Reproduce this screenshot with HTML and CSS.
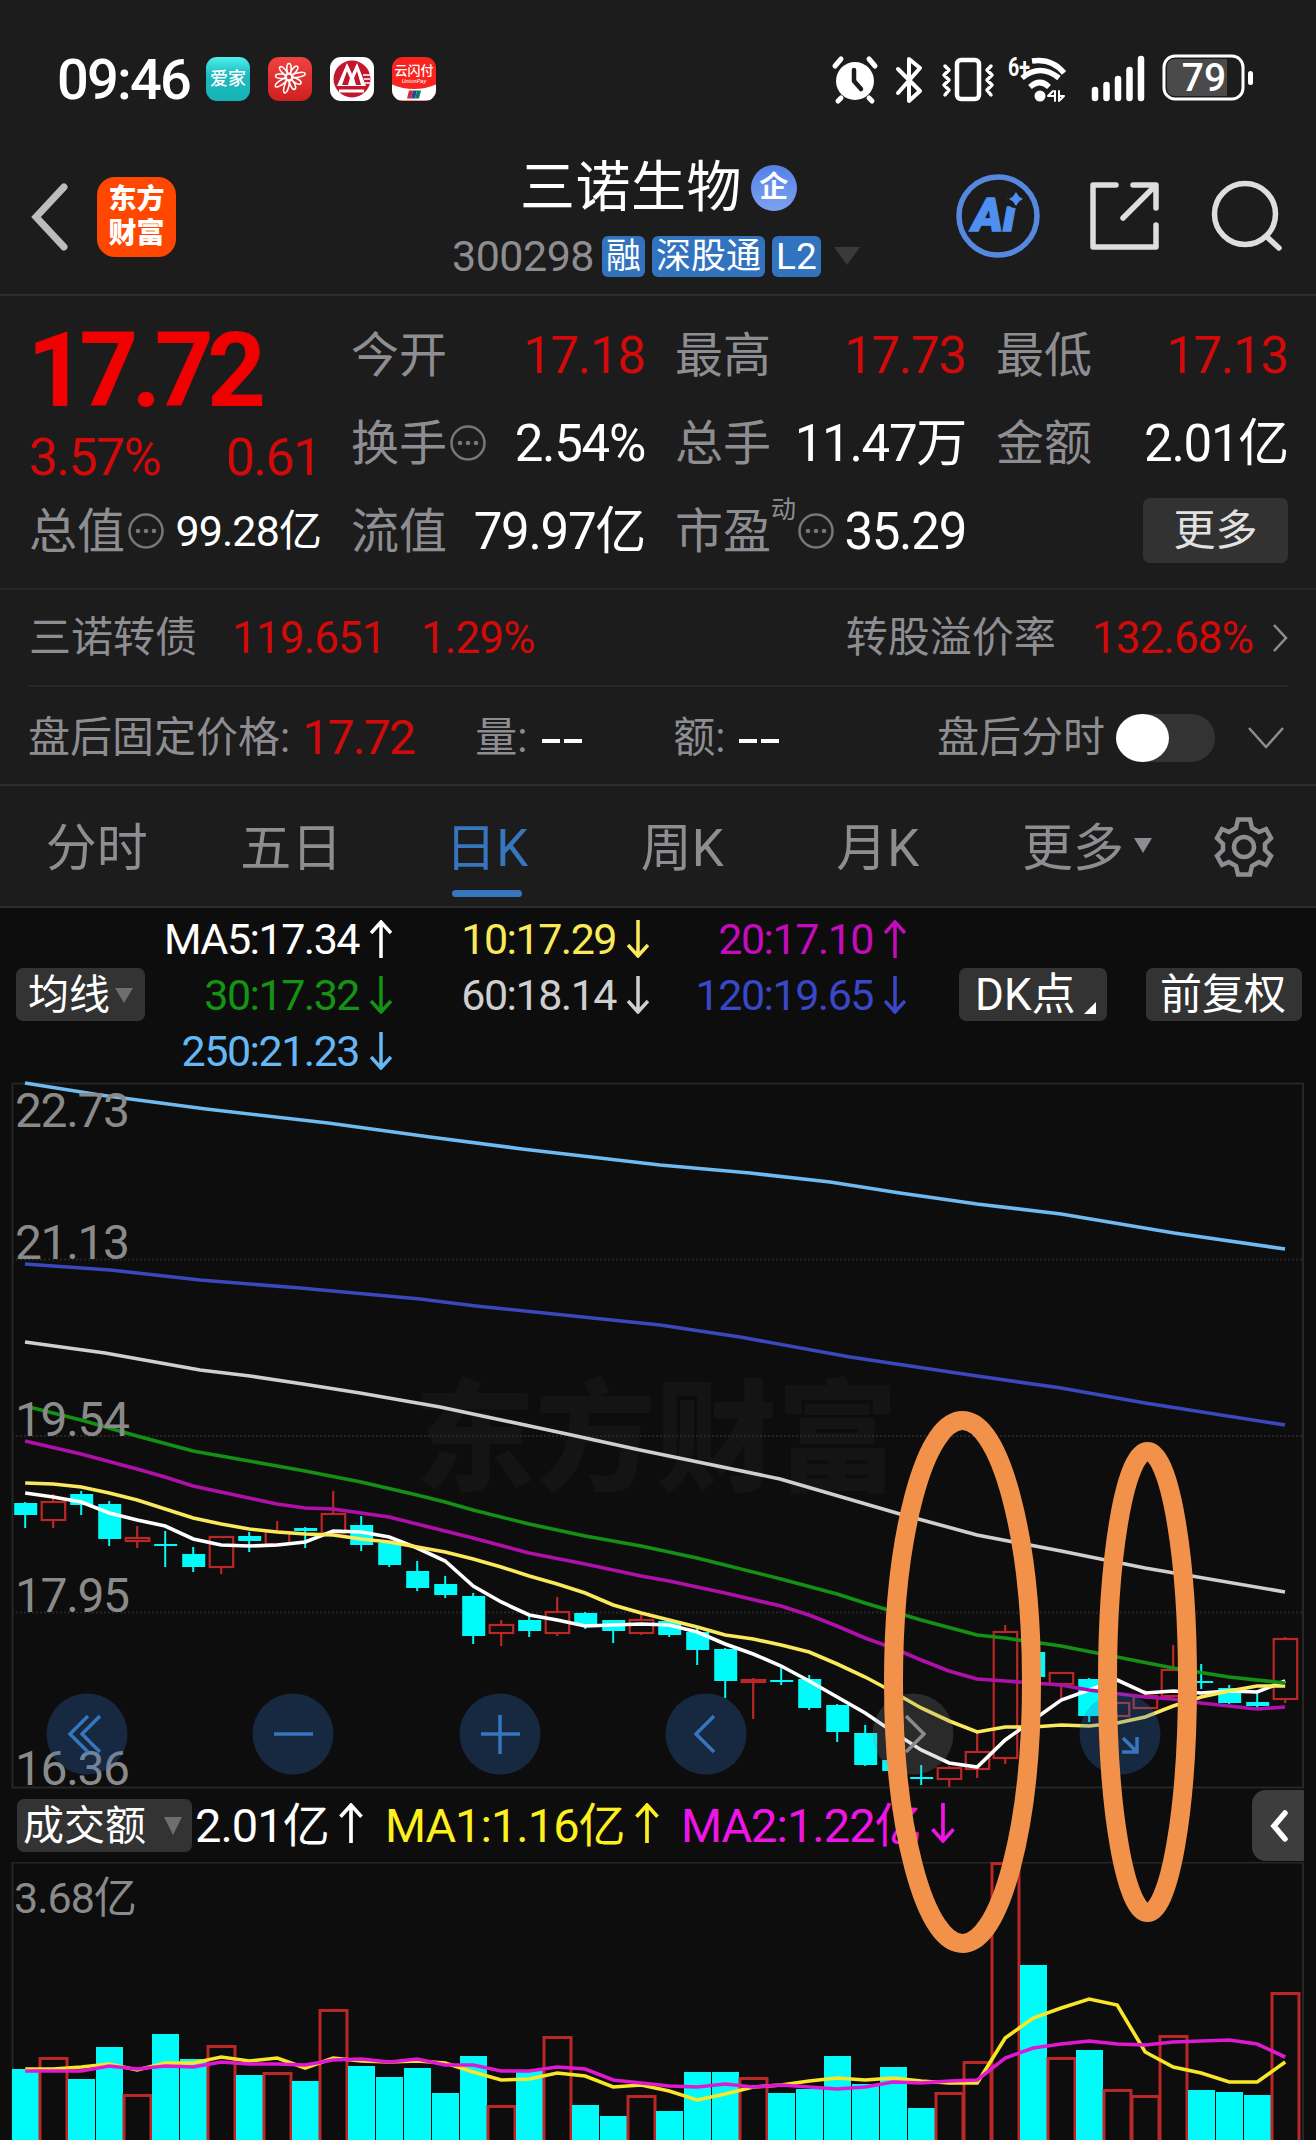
FILE: index.html
```html
<!DOCTYPE html>
<html lang="zh-CN">

<head>
  <meta charset="utf-8">
  <title>三诺生物 300298</title>
  <link rel="stylesheet" href="styles.css">
</head>

<body>
  <svg class="defs">
    <symbol id="up" viewBox="0 0 22 38"><path d="M11 38V2M1 13L11 2L21 13"/></symbol>
    <symbol id="down" viewBox="0 0 22 38"><path d="M11 0V36M1 25L11 36L21 25"/></symbol>
    <symbol id="info" viewBox="0 0 36 36">
      <circle cx="18" cy="18" r="16.5" fill="none" stroke="#77777a" stroke-width="2.5"/>
      <g fill="#77777a"><circle cx="10" cy="18" r="2.3"/><circle cx="18" cy="18" r="2.3"/><circle cx="26" cy="18" r="2.3"/></g>
    </symbol>
  </svg>

  <div class="status-bar">
    <span class="time">09:46</span>
    <div class="apps">
      <span class="app app-home">爱家</span>
      <span class="app app-flower">
        <svg viewBox="0 0 44 44" fill="none" stroke="#fff" stroke-width="1.6">
          <circle cx="21" cy="20" r="3"/>
          <g id="petals">
            <ellipse cx="21" cy="11.500" rx="2.200" ry="5"/>
            <ellipse cx="21" cy="11.500" rx="2.200" ry="5" transform="rotate(38 21 20)"/>
            <ellipse cx="21" cy="10" rx="2.200" ry="6.500" transform="rotate(78 21 20)"/>
            <ellipse cx="21" cy="11.500" rx="2.200" ry="5" transform="rotate(118 21 20)"/>
            <ellipse cx="21" cy="11.500" rx="2.200" ry="5" transform="rotate(155 21 20)"/>
            <ellipse cx="21" cy="10" rx="2.200" ry="6.500" transform="rotate(195 21 20)"/>
            <ellipse cx="21" cy="10" rx="2.200" ry="6.500" transform="rotate(235 21 20)"/>
            <ellipse cx="21" cy="11.500" rx="2.200" ry="5" transform="rotate(275 21 20)"/>
            <ellipse cx="21" cy="11.500" rx="2.200" ry="5" transform="rotate(318 21 20)"/>
          </g>
        </svg>
      </span>
      <span class="app app-bank">
        <svg viewBox="0 0 44 44">
          <circle cx="22" cy="22" r="18.500" fill="#c2182f"/>
          <path d="M7 29L17 6L22 17L27 6L36 29Z" fill="#fff"/>
          <path d="M12 28L17 14L20 21L18 28ZM24 21L27 14L31 28H26Z" fill="#c2182f"/>
          <path d="M9 34H34" stroke="#fff" stroke-width="3"/>
          <path d="M33 18H40M34 22H40M35 26H40" stroke="#fff" stroke-width="1.500"/>
        </svg>
      </span>
      <span class="app app-pay">
        <b>云闪付</b>
        <i>UnionPay</i>
        <svg viewBox="0 0 44 16">
          <path d="M0 0Q22 9 44 0V16H0Z" fill="#fff"/>
          <path d="M17 6H21L19 14H15Z" fill="#d7263d"/><path d="M21 6H25L23 14H19Z" fill="#1d4e89"/><path d="M25 6H29L27 14H23Z" fill="#0b7a75"/>
        </svg>
      </span>
    </div>
    <svg class="system" viewBox="0 0 430 60">
      <g fill="none" stroke="#fff" stroke-width="4" stroke-linecap="round" stroke-linejoin="round">
        <circle cx="26" cy="31" r="19" fill="#fff" stroke="none"/>
        <path d="M6 16L12 9M46 16L40 9M12 48L9 51M40 48L43 51" stroke-width="5"/>
        <path d="M25 20V31L32 39" stroke="#1c1c1c" stroke-width="4.500"/>
        <path d="M69 19L91 41L80 51V9L91 18L69 43"/>
        <rect x="128" y="10" width="22" height="39" rx="4" stroke-width="4.500"/>
        <path d="M116 16L120 20L115 25L120 30L115 35L120 40L116 45M162 16L158 20L163 25L158 30L163 35L158 40L162 45" stroke-width="3.500"/>
        <path d="M203 11Q223 8 235 23M193 28Q211 13 230 28M201 37Q211 28 220 37" stroke-width="5.500" stroke-linecap="butt"/>
        <circle cx="211" cy="46" r="5.500" fill="#fff" stroke="none"/>
        <path d="M226 41V51M226 46H219L224 41M230 51V41M230 46H235L231 50" stroke-width="2"/>
        <path d="M266 40V48M277.500 35V48M289 29V48M300.500 20V48M312 9V48" stroke-width="6.500"/>
      </g>
      <text x="179" y="26" textLength="22" lengthAdjust="spacingAndGlyphs" class="wifi-gen">6+</text>
      <rect x="335" y="6" width="79" height="43" rx="11" fill="#1c1c1c" stroke="#fff" stroke-width="3"/>
      <path d="M346 9H398V46H346Q338 46 338 38V17Q338 9 346 9Z" fill="#4a4a4a"/>
      <rect x="419" y="21" width="5" height="14" rx="2.500" fill="#fff"/>
      <text x="375" y="41" class="battery">79</text>
    </svg>
  </div>

  <div class="title-bar">
    <svg class="back" viewBox="0 0 40 68"><path d="M34 4L6 34L34 64" fill="none" stroke="#bcbcbc" stroke-width="7" stroke-linecap="round"/></svg>
    <div class="logo">东方<br>财富</div>
    <div class="stock">
      <div class="name">三诺生物<span class="corp">企</span></div>
      <div class="code">
        <span>300298</span>
        <em>融</em><em>深股通</em><em>L2</em>
        <svg class="tri" viewBox="0 0 26 18"><path d="M0 0H26L13 18Z" fill="#3a3a3a"/></svg>
      </div>
    </div>
    <div class="tools">
      <svg class="ai" viewBox="0 0 84 86">
        <circle cx="42" cy="43" r="39" fill="none" stroke="#5588de" stroke-width="5.500"/>
        <text x="16" y="58">Ai</text>
        <circle cx="59" cy="27" r="8" fill="#1c1c1c"/>
        <path d="M60 19L63 23.500L67 26L63 28.500L60 33L57 28.500L53 26L57 23.500Z" fill="#4f8ff0"/>
      </svg>
      <svg class="share" viewBox="0 0 70 70" fill="none" stroke="#dedede" stroke-width="5.500" stroke-linecap="round" stroke-linejoin="round">
        <path d="M26 4H3V66H66V44M43 4H66V27M65 5L33 37"/>
      </svg>
      <svg class="search" viewBox="0 0 72 72" fill="none" stroke="#dedede" stroke-width="5.500" stroke-linecap="round">
        <circle cx="34" cy="34" r="30.500"/><path d="M56 57L68 68"/>
      </svg>
    </div>
  </div>

  <div class="quote">
    <div class="price">
      <div class="last">17.72</div>
      <div class="change"><span>3.57%</span><span>0.61</span></div>
    </div>
    <div class="item"><label>今开</label><span class="red">17.18</span></div>
    <div class="item"><label>最高</label><span class="red">17.73</span></div>
    <div class="item"><label>最低</label><span class="red">17.13</span></div>
    <div class="item"><label>换手</label><svg class="info"><use href="#info"/></svg><span>2.54%</span></div>
    <div class="item"><label>总手</label><span>11.47万</span></div>
    <div class="item"><label>金额</label><span>2.01亿</span></div>
    <div class="item cap"><label>总值</label><svg class="info"><use href="#info"/></svg><span>99.28亿</span></div>
    <div class="item"><label>流值</label><span>79.97亿</span></div>
    <div class="item"><label>市盈</label><sup>动</sup><svg class="info"><use href="#info"/></svg><span>35.29</span></div>
    <div class="item"><button class="more">更多</button></div>
  </div>

  <div class="bond">
    <span class="bond-name">三诺转债</span>
    <span class="red bond-price">119.651</span>
    <span class="red bond-change">1.29%</span>
    <span class="push">转股溢价率</span>
    <span class="red bond-rate">132.68%</span>
    <svg class="next" viewBox="0 0 15 28"><path d="M1 1L13 14L1 27" fill="none" stroke="#8e8e92" stroke-width="2.500"/></svg>
  </div>

  <div class="after">
    <span class="after-label">盘后固定价格:</span>
    <span class="red after-price">17.72</span>
    <span class="after-vol">量:</span><i class="dash"></i><i class="dash"></i>
    <span class="after-sum">额:</span><i class="dash"></i><i class="dash"></i>
    <span class="push">盘后分时</span>
    <div class="toggle"></div>
    <svg class="expand" viewBox="0 0 36 22"><path d="M1 1L18 20L35 1" fill="none" stroke="#8e8e92" stroke-width="2.500"/></svg>
  </div>

  <div class="tabs">
    <span>分时</span>
    <span>五日</span>
    <span class="active">日K</span>
    <span>周K</span>
    <span>月K</span>
    <span class="tab-more">更多<svg viewBox="0 0 18 15"><path d="M0 0H18L9 15Z" fill="#8e8e92"/></svg></span>
    <svg class="gear" viewBox="0 0 60 60" fill="none" stroke="#8e8e92" stroke-width="4.500">
      <path d="M24 2.500H36L38 11L45 15L52 12L57 21L51 27V33L57 39L52 48L45 45L38 49L36 57.500H24L22 49L15 45L8 48L3 39L9 33V27L3 21L8 12L15 15L22 11Z"/>
      <circle cx="30" cy="30" r="10"/>
    </svg>
  </div>

  <div class="ma-bar">
    <div class="chip chip-ma">均线<svg viewBox="0 0 18 15"><path d="M0 0H18L9 15Z" fill="#6e6e6e"/></svg></div>
    <div class="ma-list">
      <span class="ma5">MA5:17.34<svg><use href="#up"/></svg></span>
      <span class="ma10">10:17.29<svg><use href="#down"/></svg></span>
      <span class="ma20">20:17.10<svg><use href="#up"/></svg></span>
      <span class="ma30">30:17.32<svg><use href="#down"/></svg></span>
      <span class="ma60">60:18.14<svg><use href="#down"/></svg></span>
      <span class="ma120">120:19.65<svg><use href="#down"/></svg></span>
      <span class="ma250">250:21.23<svg><use href="#down"/></svg></span>
    </div>
    <div class="chip chip-dk">DK点<svg viewBox="0 0 12 12"><path d="M12 0V12H0Z" fill="#fff"/></svg></div>
    <div class="chip chip-fq">前复权</div>
  </div>

  <div class="charts">
    <svg id="kline" class="kline" viewBox="0 1083 1316 705">
      <text class="watermark" x="414" y="1481">东方财富</text>
      <g class="grid">
        <path d="M12 1259.500H1303M12 1436H1303M12 1612.500H1303" stroke-dasharray="2 2"/>
        <rect x="12.500" y="1083.500" width="1290.500" height="704"/>
      </g>
      <g id="candles"></g>
      <g id="ma-lines" class="lines"></g>
      <g class="axis">
        <text x="15" y="1127">22.73</text>
        <text x="15" y="1259">21.13</text>
        <text x="15" y="1436">19.54</text>
        <text x="15" y="1612">17.95</text>
        <text x="15" y="1785">16.36</text>
      </g>
      <g class="controls">
        <circle cx="87" cy="1734" r="40.500"/>
        <circle cx="293" cy="1734" r="40.500"/>
        <circle cx="500" cy="1734" r="40.500"/>
        <circle cx="706" cy="1734" r="40.500"/>
        <circle cx="913" cy="1734" r="40.500" class="off"/>
        <circle cx="1120" cy="1734" r="40.500"/>
        <path d="M88 1716L70 1734L88 1752M100 1716L82 1734L100 1752M274 1734H313M481 1734H520M500 1715V1754M714 1716L696 1734L714 1752M1123 1738L1137 1752M1122 1752H1137V1737"/>
        <path d="M906 1716L924 1734L906 1752" class="off"/>
      </g>
    </svg>

    <div class="volume-bar">
      <div class="chip chip-vol">成交额<svg viewBox="0 0 18 18"><path d="M0 0H18L9 18Z" fill="#6e6e6e"/></svg></div>
      <span class="vol-now">2.01亿<svg><use href="#up"/></svg></span>
      <span class="vol-ma1">MA1:1.16亿<svg><use href="#up"/></svg></span>
      <span class="vol-ma2">MA2:1.22亿<svg><use href="#down"/></svg></span>
      <div class="fold"><svg viewBox="0 0 18 32"><path d="M15 3L4 16L15 29" fill="none" stroke="#fff" stroke-width="5.500" stroke-linecap="round"/></svg></div>
    </div>

    <svg id="volume" class="volume" viewBox="0 1862 1316 278">
      <path class="grid" d="M12.500 2140V1862.500H1303V2140"/>
      <g id="bars"></g>
      <g id="vol-lines" class="lines"></g>
      <text class="axis" x="14" y="1913">3.68亿</text>
    </svg>

    <svg class="marks" viewBox="0 1083 1316 1057">
      <ellipse cx="962.500" cy="1682" rx="69" ry="261.500"/>
      <ellipse cx="1147.500" cy="1682" rx="40" ry="230.500"/>
    </svg>
  </div>

  <script src="chart.js"></script>
</body>

</html>
```
FILE: styles.css
```css
html, body {
  margin: 0;
  padding: 0;
}
body {
  width: 1316px;
  height: 2140px;
  overflow: hidden;
  background: #1c1c1c;
  color: #fff;
  font-family: Roboto, "Noto Sans CJK SC", sans-serif;
  line-height: 1;
  white-space: nowrap;
}
svg {
  display: block;
  flex: none;
}
.defs {
  width: 0;
  height: 0;
}
.red {
  color: #d20a0a;
}
.push {
  margin-left: auto;
}

/* status bar */
.status-bar {
  height: 117px;
  padding: 40px 0 0 57px;
  box-sizing: border-box;
  display: flex;
}
.time {
  width: 149px;
  padding-top: 12px;
  font-size: 56px;
  font-weight: 500;
  letter-spacing: -1.8px;
}
.apps {
  display: flex;
  gap: 18px;
  padding-top: 17px;
}
.app {
  width: 44px;
  height: 44px;
  border-radius: 11px;
  overflow: hidden;
}
.app-home {
  background: linear-gradient(#4ff0ee, #1fbcbf 40%, #15b2b6);
  font-size: 18px;
  font-weight: 500;
  line-height: 44px;
  text-align: center;
}
.app-flower {
  background: linear-gradient(#ef4340, #cf2020);
}
.app-bank {
  background: #fff;
}
.app-pay {
  background: #f8241d;
  display: flex;
  flex-direction: column;
  align-items: center;
}
.app-pay b {
  margin-top: 7px;
  font-size: 13px;
  font-weight: 500;
}
.app-pay i {
  font-size: 6px;
  margin-top: 1px;
}
.app-pay svg {
  width: 44px;
  height: 17px;
}
.system {
  width: 430px;
  height: 60px;
  margin: 10px 0 0 393px;
}
.wifi-gen {
  fill: #fff;
  font-size: 26px;
  font-weight: 700;
}
.battery {
  fill: #fff;
  font-size: 39px;
  font-weight: 500;
  text-anchor: middle;
}

/* title bar */
.title-bar {
  height: 179px;
  box-sizing: border-box;
  border-bottom: 2px solid #2c2c2c;
  display: flex;
}
.back {
  width: 40px;
  height: 68px;
  margin: 66px 0 0 30px;
}
.logo {
  width: 79px;
  height: 80px;
  margin: 60px 0 0 27px;
  padding-top: 6px;
  box-sizing: border-box;
  border-radius: 18px;
  background: #ff4700;
  font-size: 28px;
  font-weight: 900;
  line-height: 34px;
  text-align: center;
}
.stock {
  width: 410px;
  margin-left: 276px;
}
.name {
  height: 116px;
  padding: 43px 0 0 68px;
  box-sizing: border-box;
  display: flex;
  font-size: 55px;
  letter-spacing: 0.5px;
}
.corp {
  width: 46px;
  height: 46px;
  margin: 5px 0 0 9px;
  border-radius: 50%;
  background: linear-gradient(#5482e4, #7da1f0);
  font-size: 29px;
  font-weight: 700;
  line-height: 45px;
  text-align: center;
}
.code {
  height: 46px;
  display: flex;
  align-items: center;
  color: #8e8e92;
  font-size: 43px;
  letter-spacing: -0.5px;
}
.code span {
  width: 150px;
}
.code em {
  height: 41px;
  margin-right: 7px;
  padding: 0 4px;
  border-radius: 6px;
  background: #3273c0;
  color: #fff;
  font-size: 35px;
  font-style: normal;
  line-height: 42px;
  letter-spacing: 0;
}
.code em:last-of-type {
  font-size: 37px;
}
.code .tri {
  width: 26px;
  height: 18px;
  margin-left: 6px;
}
.tools {
  display: flex;
  margin-left: 94px;
}
.ai {
  width: 84px;
  height: 86px;
  margin-top: 56px;
}
.ai text {
  fill: #4f8ff0;
  stroke: #4f8ff0;
  stroke-width: 1.5px;
  font-size: 47px;
  font-weight: 900;
  font-style: italic;
}
.share {
  width: 70px;
  height: 70px;
  margin: 64px 0 0 50px;
}
.search {
  width: 72px;
  height: 72px;
  margin: 63px 0 0 51px;
}

/* quote */
.quote {
  height: 294px;
  padding: 15px 28px 0 29px;
  box-sizing: border-box;
  border-bottom: 2px solid #272727;
  display: grid;
  grid-template-columns: 292px 294px 291px 292px;
  grid-template-rows: 88px 88px 88px;
  column-gap: 30px;
}
.price {
  grid-row: span 2;
  color: #f00000;
}
.last {
  height: 117px;
  margin-left: -2px;
  font-size: 103px;
  font-weight: 700;
  line-height: 119px;
  letter-spacing: -6.8px;
}
.change {
  display: flex;
  justify-content: space-between;
  color: #d20a0a;
  font-size: 52px;
  line-height: 60px;
  letter-spacing: -1.6px;
}
.item {
  display: flex;
  align-items: center;
  font-size: 51px;
  letter-spacing: -1.3px;
}
.item label {
  padding-top: 2px;
  color: #8e8e92;
  font-size: 48px;
  letter-spacing: 0;
}
.item span {
  margin-left: auto;
}
.cap span {
  font-size: 43px;
  letter-spacing: -0.9px;
}
.item sup {
  align-self: flex-start;
  margin-top: 10px;
  color: #8e8e92;
  font-size: 25px;
}
.info {
  width: 36px;
  height: 36px;
  margin-left: 3px;
}
.more {
  width: 145px;
  height: 65px;
  margin: 0 0 1px auto;
  padding: 0 0 7px;
  border: 0;
  border-radius: 7px;
  background: #323232;
  color: #e2e2e2;
  font: 42px "Noto Sans CJK SC", sans-serif;
  line-height: 58px;
}

/* convertible bond */
.bond {
  height: 97px;
  margin: 0 28px;
  padding-left: 1px;
  box-sizing: border-box;
  border-bottom: 2px solid #272727;
  display: flex;
  align-items: center;
  color: #8e8e92;
  font-size: 42px;
}
.bond .red {
  font-size: 44px;
  letter-spacing: -0.9px;
}
.bond-price {
  margin-left: 35px;
  width: 189px;
}
.bond-rate {
  margin: 0 20px 0 36px;
}
.next {
  width: 15px;
  height: 28px;
}

/* after hours */
.after {
  height: 99px;
  padding: 4px 32px 0 28px;
  box-sizing: border-box;
  border-bottom: 2px solid #2e2e2e;
  display: flex;
  align-items: center;
  color: #8e8e92;
  font-size: 42px;
}
.after-price {
  width: 173px;
  margin-left: 12px;
  font-size: 48px;
  letter-spacing: -1.7px;
}
.after-vol {
  width: 67px;
}
.after-sum {
  width: 66px;
  margin-left: 87px;
}
.dash {
  width: 18px;
  height: 4px;
  margin: 6px 4px 0 0;
  background: #fff;
}
.toggle {
  width: 99px;
  height: 48px;
  margin-left: 11px;
  border-radius: 24px;
  background: #333;
}
.toggle::before {
  content: "";
  display: block;
  width: 53px;
  height: 48px;
  border-radius: 50%;
  background: #fff;
}
.expand {
  width: 36px;
  height: 22px;
  margin-left: 33px;
}

/* period tabs */
.tabs {
  height: 122px;
  box-sizing: border-box;
  border-bottom: 2px solid #2e2e2e;
  display: grid;
  grid-template-columns: 193.5px repeat(4, 195.5px) 223px 90px;
  color: #8e8e92;
  font-size: 51px;
  text-align: center;
}
.tabs span {
  padding-top: 37px;
}
.tabs .active {
  color: #3576bd;
}
.active::after {
  content: "";
  display: block;
  width: 70px;
  height: 7px;
  margin: 16px auto 0;
  border-radius: 4px;
  background: #3576bd;
}
.tab-more {
  display: flex;
  justify-content: center;
}
.tab-more svg {
  width: 18px;
  height: 15px;
  margin: 15px 0 0 10px;
}
.gear {
  width: 60px;
  height: 60px;
  margin: 31px auto 0;
}

/* moving averages */
.ma-bar {
  height: 175px;
  box-sizing: border-box;
  padding: 3px 0 0 16px;
  background: #0d0d0d;
  display: flex;
}
.chip {
  height: 53px;
  box-sizing: border-box;
  border-radius: 7px;
  background: #333;
  display: flex;
  flex: none;
  font-size: 41px;
  line-height: 54px;
}
.chip-ma {
  width: 129px;
  margin-top: 57px;
  padding-left: 12px;
}
.chip-ma svg {
  width: 18px;
  height: 15px;
  margin: 20px 0 0 5px;
}
.ma-list {
  width: 761px;
  display: grid;
  grid-template-columns: 247px 257px 257px;
  grid-auto-rows: 56px;
  font-size: 43px;
  line-height: 56px;
  letter-spacing: -1.5px;
}
.ma-list span {
  display: flex;
  justify-content: flex-end;
}
.ma-list svg,
.volume-bar span svg {
  width: 22px;
  height: 38px;
  margin: 9px 0 0 11px;
  fill: none;
  stroke: currentColor;
  stroke-width: 3.5px;
}
.ma5 { color: #fff; }
.ma10 { color: #fbe95c; }
.ma20 { color: #c40cbc; }
.ma30 { color: #149414; }
.ma60 { color: #cfcfcf; }
.ma120 { color: #3848c8; }
.ma250 { color: #66b8f4; }
.chip-dk {
  width: 148px;
  margin: 57px 0 0 53px;
  padding-left: 16px;
  font-size: 44px;
}
.chip-dk svg {
  width: 12px;
  height: 12px;
  margin: 34px 0 0 9px;
}
.chip-fq {
  width: 156px;
  margin: 57px 0 0 39px;
  padding-left: 14px;
  font-size: 42px;
}

/* charts */
.charts {
  position: relative;
  background: #0d0d0d;
}
.kline {
  width: 1316px;
  height: 705px;
  overflow: visible;
}
.volume {
  width: 1316px;
  height: 278px;
}
.grid {
  fill: none;
  stroke: #262626;
  stroke-width: 2px;
}
.watermark {
  fill: #141414;
  font-size: 121px;
  font-weight: 900;
}
.axis {
  fill: #8a8a8a;
  font-size: 48px;
  letter-spacing: -1.4px;
}
.volume .axis {
  font-size: 43px;
  letter-spacing: -1px;
}
.lines {
  fill: none;
  stroke-width: 3.6px;
}
.fall {
  fill: #00fbfb;
  stroke: none;
}
.rise {
  fill: none;
  stroke: #bb2626;
  stroke-width: 2.2px;
}
.rise-volume {
  fill: #0d0d0d;
  stroke: #bb2626;
  stroke-width: 3px;
}
.controls circle {
  fill: rgba(49, 116, 199, 0.28);
}
.controls circle.off {
  fill: rgba(140, 140, 140, 0.23);
}
.controls path {
  fill: none;
  stroke: #3576bd;
  stroke-width: 3.5px;
}
.controls path.off {
  stroke: #8a8a8e;
}
.volume-bar {
  height: 74px;
  padding-left: 17px;
  display: flex;
  font-size: 47px;
  line-height: 75px;
  letter-spacing: -1px;
}
.volume-bar span {
  display: flex;
}
.chip-vol {
  width: 175px;
  margin-top: 11px;
  padding-left: 6px;
  letter-spacing: 0;
}
.chip-vol svg {
  width: 18px;
  height: 18px;
  margin: 18px 0 0 18px;
}
.volume-bar span svg {
  width: 24px;
  height: 40px;
  margin: 15px 0 0 10px;
}
.vol-now {
  width: 190px;
  margin-left: 3px;
}
.vol-ma1 {
  width: 296px;
  color: #fdf01e;
}
.vol-ma2 {
  color: #f015e6;
}
.fold {
  width: 52px;
  height: 71px;
  margin: 2px 12px 0 auto;
  border-radius: 14px 0 0 14px;
  background: #3d3d3d;
}
.fold svg {
  width: 18px;
  height: 32px;
  margin: 20px 0 0 18px;
}
.marks {
  position: absolute;
  left: 0;
  top: 0;
  width: 1316px;
  height: 1057px;
  fill: none;
  stroke: #f2924a;
  stroke-width: 19px;
}
```
FILE: chart.js
```js
// [rise, high, body top, body bottom, low]
var candles = [
  [0,1502,1503,1515,1528],[1,1494,1501,1520,1528],[0,1491,1494,1505,1515],[0,1501,1504,1539,1546],
  [1,1526,1537,1541,1548],[0,1531,1544,1546,1567],[0,1547,1554,1567,1572],[1,1536,1536,1567,1574],
  [0,1532,1536,1541,1552],[1,1521,1531,1544,1544],[0,1527,1528,1531,1548],[1,1491,1513,1533,1533],
  [0,1516,1525,1545,1551],[0,1543,1543,1565,1567],[0,1561,1571,1588,1591],[0,1576,1584,1595,1598],
  [0,1593,1596,1636,1644],[1,1620,1624,1633,1646],[0,1616,1620,1631,1637],[1,1597,1611,1633,1636],
  [0,1612,1613,1625,1629],[0,1620,1620,1631,1643],[1,1615,1619,1633,1635],[0,1620,1621,1635,1637],
  [0,1627,1632,1650,1665],[0,1648,1649,1681,1698],[1,1678,1679,1682,1719],[0,1667,1680,1682,1685],
  [0,1675,1679,1708,1710],[0,1704,1705,1732,1742],[0,1725,1733,1765,1766],[0,1760,1760,1771,1771],
  [0,1765,1777,1779,1785],[1,1766,1767,1779,1787],[1,1732,1751,1769,1778],[1,1625,1631,1758,1764],
  [0,1652,1652,1677,1677],[1,1672,1672,1684,1698],[0,1678,1679,1716,1722],[1,1702,1702,1716,1716],
  [1,1690,1695,1708,1708],[1,1645,1669,1696,1696],[0,1664,1681,1683,1689],[0,1685,1688,1703,1704],
  [0,1690,1702,1706,1708],[1,1637,1638,1699,1703]
];

var volumes = [
  2069,2057,2079,2047,2094,2034,2059,2045,2075,2072,2081,2009,2066,2077,2068,2093,
  2056,2105,2071,2036,2105,2116,2095,2111,2072,2072,2077,2093,2089,2056,2084,2067,
  2108,2092,2061,1862,1965,2057,2050,2089,2095,2035,2090,2092,2095,1992
];

// one value per day
var ma5 = [
  1493,1497,1502,1513,1520,1526,1539,1545,1546,1545,1542,1531,1532,1537,1548,1561,
  1586,1602,1615,1620,1626,1625,1624,1625,1632,1644,1654,1666,1681,1697,1713,1732,
  1750,1763,1767,1740,1720,1700,1690,1680,1693,1691,1693,1691,1692,1681
];
var ma10 = [
  1483,1484,1487,1493,1500,1509,1518,1524,1529,1532,1534,1535,1539,1542,1547,1552,
  1559,1567,1576,1584,1593,1605,1613,1620,1627,1635,1639,1645,1652,1664,1677,1692,
  1708,1721,1732,1727,1727,1725,1726,1723,1717,1706,1697,1691,1686,1686
];
var volMa1 = [
  2069,2069,2067,2064,2070,2063,2063,2057,2061,2058,2068,2058,2061,2062,2061,2063,
  2072,2080,2079,2073,2076,2087,2085,2091,2100,2094,2087,2085,2081,2078,2080,2078,
  2081,2083,2083,2038,2018,2008,1999,2005,2052,2067,2073,2082,2082,2062
];
var volMa2 = [
  2071,2071,2071,2066,2069,2066,2067,2062,2064,2064,2065,2060,2059,2062,2059,2065,
  2065,2071,2071,2067,2069,2080,2083,2086,2087,2084,2087,2085,2087,2089,2087,2082,
  2083,2081,2080,2058,2048,2044,2041,2044,2045,2042,2041,2040,2044,2057
];

// slow averages only keep the turning points
var ma20 = '25,1441 81,1454 137,1469 165,1477 193,1486 249,1498 277,1504 305,1508 333,1509 361,1513 389,1517 417,1524 445,1531 473,1538 529,1553 585,1564 641,1576 669,1581 697,1587 725,1593 781,1606 809,1615 837,1626 865,1638 893,1648 921,1660 949,1671 977,1679 1005,1681 1061,1685 1089,1690 1145,1697 1173,1699 1201,1703 1229,1706 1257,1709 1285,1707';
var ma30 = '25,1406 81,1420 137,1436 193,1451 249,1461 277,1466 305,1471 361,1482 417,1495 445,1502 473,1510 529,1524 585,1536 641,1546 669,1552 697,1558 725,1565 781,1579 837,1594 865,1603 921,1620 977,1635 1005,1638 1033,1642 1061,1646 1117,1657 1173,1668 1229,1677 1285,1683';
var ma60 = '25,1342 105,1353 200,1370 250,1376 303,1384 360,1393 440,1407 567,1434 640,1450 780,1479 900,1514 977,1535 1061,1551 1145,1568 1285,1592';
var ma120 = '25,1264 110,1270 200,1280 300,1288 420,1299 476,1306 660,1325 740,1337 850,1357 930,1369 977,1376 1061,1388 1145,1403 1285,1425';
var ma250 = '25,1083 100,1095 206,1109 328,1123 430,1137 522,1149 660,1165 750,1173 830,1182 900,1193 977,1204 1061,1214 1174,1233 1285,1249';

function x(i) {
  return 25.2 + i * 28;
}

function points(values) {
  return values.map((v, i) => x(i) + ',' + v).join(' ');
}

function line(list, color) {
  return '<polyline points="' + list + '" stroke="' + color + '"/>';
}

var html = '';
candles.forEach((c, i) => {
  var cx = x(i);
  if (c[0]) {
    html += '<path class="rise" d="M' + cx + ' ' + c[1] + 'V' + c[2] + 'M' + cx + ' ' + c[3] + 'V' + c[4] + '"/>';
    html += '<rect class="rise" x="' + (cx - 11.5) + '" y="' + (c[2] + 1) + '" width="23.5" height="' + (c[3] - c[2] - 1) + '"/>';
  } else {
    html += '<rect class="fall" x="' + (cx - 1) + '" y="' + c[1] + '" width="2" height="' + (c[4] - c[1]) + '"/>';
    html += '<rect class="fall" x="' + (cx - 11) + '" y="' + c[2] + '" width="23" height="' + (c[3] - c[2]) + '"/>';
  }
});
document.getElementById('candles').innerHTML = html;

document.getElementById('ma-lines').innerHTML =
  line(ma250, '#6fbaf0') + line(ma120, '#3a48be') + line(ma60, '#cfcfcf') +
  line(points(ma5), '#ffffff') + line(points(ma10), '#fbe95c') +
  line(ma20, '#b010aa') + line(ma30, '#149014');

html = '';
volumes.forEach((top, i) => {
  var left = 12 + i * 28;
  if (candles[i][0]) {
    html += '<rect class="rise-volume" x="' + left + '" y="' + (top + 1.5) + '" width="27" height="300"/>';
  } else {
    html += '<rect class="fall" x="' + left + '" y="' + top + '" width="27" height="300"/>';
  }
});
document.getElementById('bars').innerHTML = html;

document.getElementById('vol-lines').innerHTML =
  line(points(volMa1), '#f8e726') + line(points(volMa2), '#e018d2');
```
